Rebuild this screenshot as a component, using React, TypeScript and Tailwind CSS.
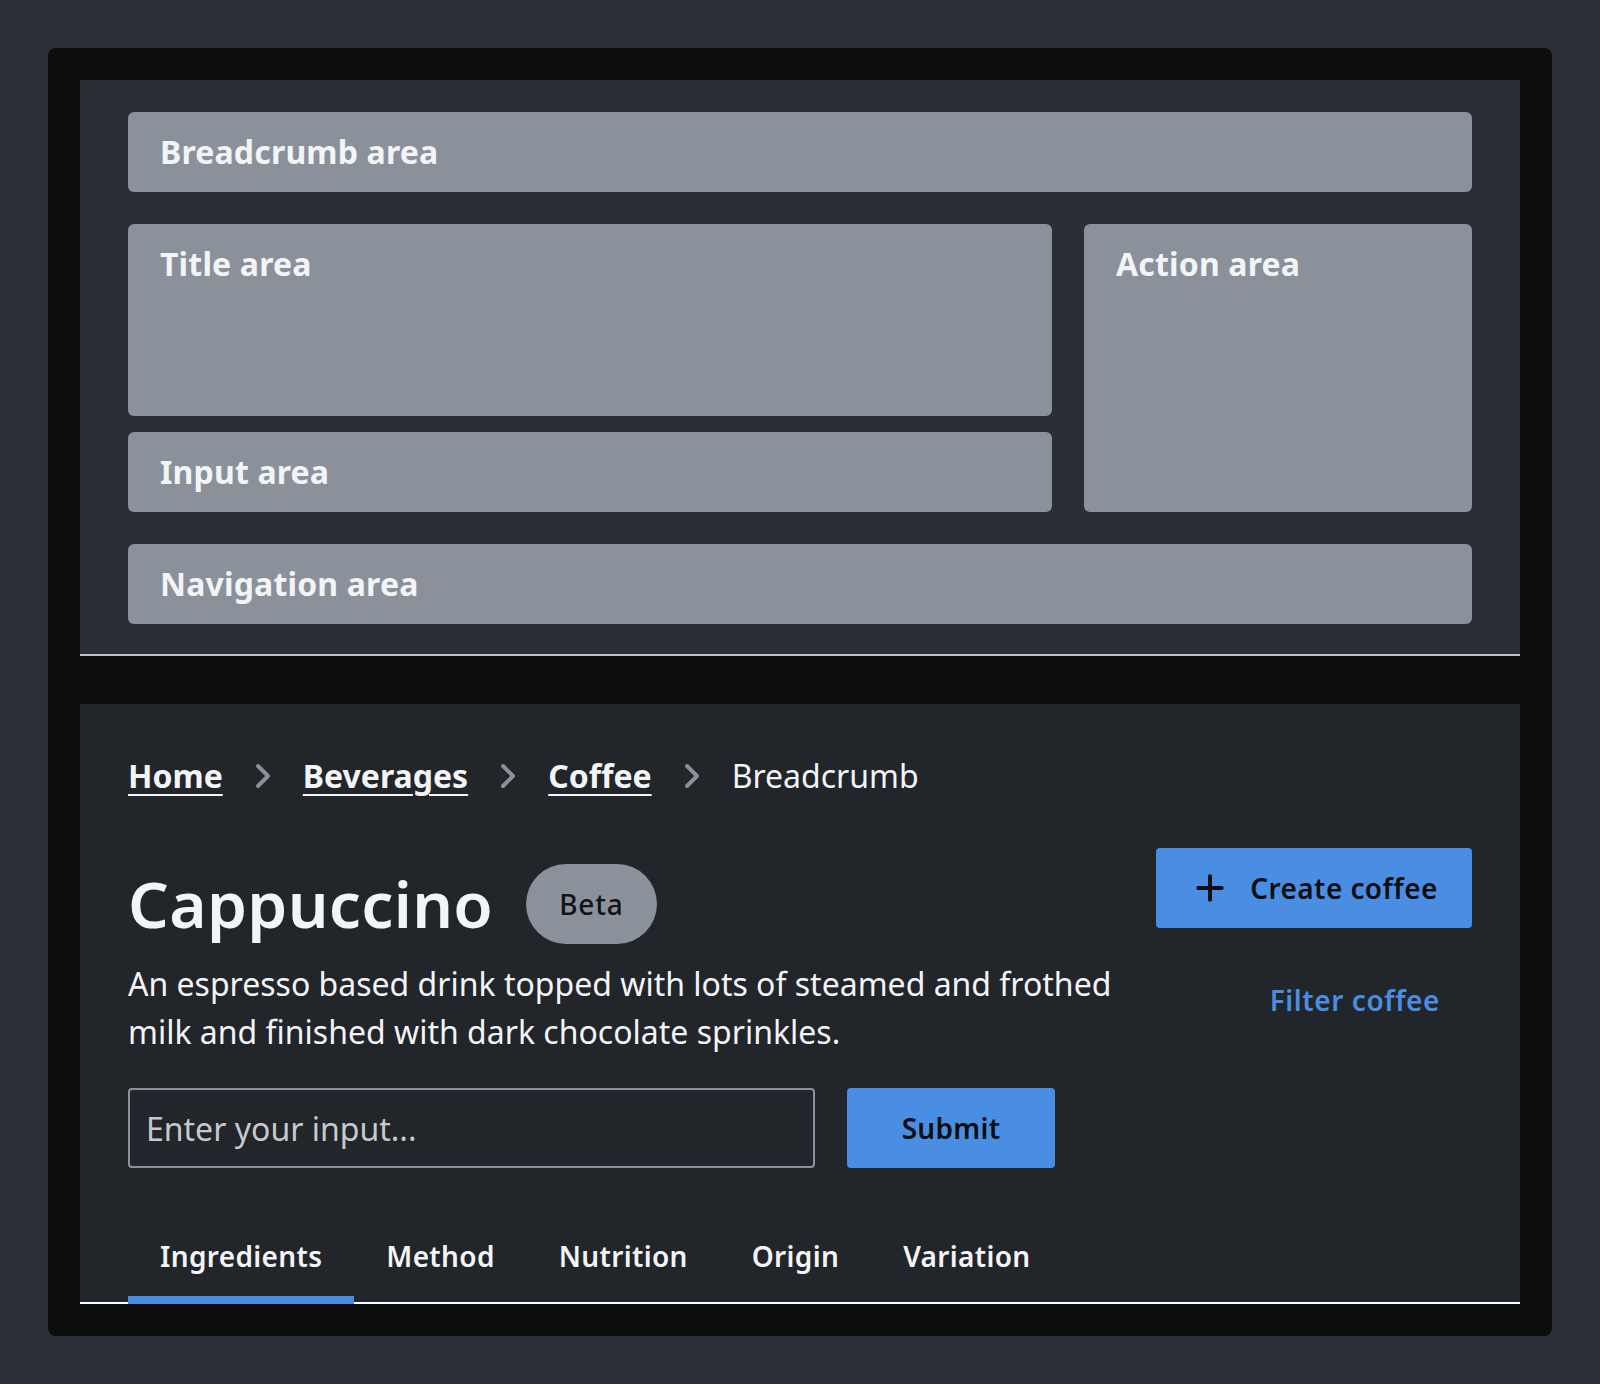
import React from "react";
import { ChevronRight, Plus } from "lucide-react";

const crumbs = ["Home", "Beverages", "Coffee"];
const tabs = ["Ingredients", "Method", "Nutrition", "Origin", "Variation"];

// gray placeholder block used in the layout diagram
const Block = ({ label, className }: { label: string; className?: string }) => (
  <div className={`rounded-md bg-[#8a919b] px-8 py-6 ${className ?? ""}`}>
    <div className="text-[32px] font-bold leading-8 tracking-[0.005em] text-[#f3f4f6]">{label}</div>
  </div>
);

const App = () => {
  return (
    <div
      className="min-h-[1384px] bg-[#2c2f35] px-12 pt-12"
      style={{ fontFamily: '"Noto Sans", "Open Sans", sans-serif' }}
    >
      <div className="flex flex-col gap-12 rounded-lg bg-[#0c0e0e] p-8">
        {/* Layout diagram */}
        <div className="flex flex-col gap-8 border-b-2 border-[#bcc1c8] bg-[#2b2e34] px-12 pt-8 pb-[30px]">
          <Block label="Breadcrumb area" className="h-20" />
          <div className="grid grid-cols-[1fr_388px] gap-8">
            <div className="flex flex-col gap-4">
              <Block label="Title area" className="h-48" />
              <Block label="Input area" className="h-20" />
            </div>
            <Block label="Action area" className="h-full" />
          </div>
          <Block label="Navigation area" className="h-20" />
        </div>

        {/* Example */}
        <div className="border-b-2 border-white bg-[#222529] px-12 pt-12">
          {/* Breadcrumb */}
          <nav className="flex h-12 items-center text-[32px] text-[#f3f4f6]">
            {crumbs.map((c) => (
              <React.Fragment key={c}>
                <a href="#" className="font-bold underline decoration-2 underline-offset-[6px]">
                  {c}
                </a>
                <ChevronRight size={40} strokeWidth={2.4} className="mx-5 text-[#8a919b]" />
              </React.Fragment>
            ))}
            <span>Breadcrumb</span>
          </nav>

          {/* Header */}
          <div className="mt-12 flex gap-8">
            <div className="flex-1">
              <div className="flex h-28 items-center">
                <h1 className="text-[64px] font-semibold leading-none tracking-[0.005em] text-[#f3f4f6]">
                  Cappuccino
                </h1>
                <span className="ml-[33px] flex h-20 items-center rounded-full bg-[#8a919b] px-[33px] text-[28px] font-medium tracking-[0.03em] text-[#111315]">
                  Beta
                </span>
              </div>
              <p className="text-[32px] leading-[48px] text-[#f3f4f6]">
                An espresso based drink topped with lots of steamed and frothed milk and finished with dark chocolate
                sprinkles.
              </p>
              <div className="mt-8 flex gap-8">
                <input
                  placeholder="Enter your input..."
                  className="h-20 w-[687px] rounded-sm border-2 border-[#8a919b] bg-transparent px-4 text-[32px] text-white outline-none placeholder:text-[#c6cad0]"
                />
                <button className="h-20 w-[208px] rounded-sm bg-[#4a8ee3] text-[28px] font-semibold tracking-[0.01em] text-[#0c0e10]">
                  Submit
                </button>
              </div>
            </div>
            <div className="flex w-[316px] flex-col items-end gap-8">
              <button className="flex h-20 w-full items-center justify-center gap-5 rounded-sm bg-[#4a8ee3] text-[28px] font-semibold tracking-[0.015em] text-[#0c0e10]">
                <Plus size={40} strokeWidth={2.4} />
                Create coffee
              </button>
              <button className="h-20 px-8 text-[28px] font-semibold tracking-[0.02em] text-[#4a8ee3]">
                Filter coffee
              </button>
            </div>
          </div>

          {/* Tabs */}
          <div className="mt-10 flex">
            {tabs.map((t, i) => (
              <button
                key={t}
                className={`-mb-[2px] h-[96px] border-b-8 px-8 pt-2 text-[28px] font-semibold tracking-[0.012em] text-[#f3f4f6] ${
                  i === 0 ? "border-[#4a8ee3]" : "border-transparent"
                }`}
              >
                {t}
              </button>
            ))}
          </div>
        </div>
      </div>
    </div>
  );
};

export default App;
